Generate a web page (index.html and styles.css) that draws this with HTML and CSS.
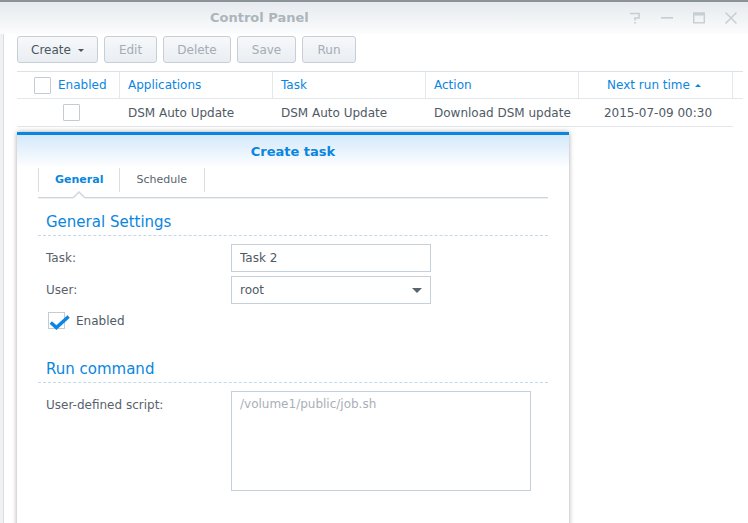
FILE: index.html
```html
<!DOCTYPE html>
<html lang="en">
<head>
<meta charset="utf-8">
<title>Control Panel</title>
<link rel="stylesheet" href="styles.css">
</head>
<body>
<div class="window">
  <header class="titlebar">
    <div class="title">Control Panel</div>
    <div class="win-ctrls">
      <span class="wc"><svg width="12" height="12" viewBox="0 0 12 12"><path d="M1 1.5H10V6H6V8.5" fill="none" stroke="#c7cdd3" stroke-width="1.6"/><rect x="5.2" y="10" width="1.6" height="1.6" fill="#c7cdd3"/></svg></span>
      <span class="wc"><svg width="12" height="12" viewBox="0 0 12 12"><rect x="0" y="5" width="12" height="1.6" fill="#c7cdd3"/></svg></span>
      <span class="wc"><svg width="12" height="12" viewBox="0 0 12 12"><rect x="0.7" y="1.2" width="10.6" height="9.6" fill="none" stroke="#c7cdd3" stroke-width="1.4"/><rect x="0" y="0.5" width="12" height="3" fill="#c7cdd3"/></svg></span>
      <span class="wc"><svg width="12" height="12" viewBox="0 0 12 12"><path d="M0.5 0.5L11.5 11.5M11.5 0.5L0.5 11.5" stroke="#c7cdd3" stroke-width="1.5"/></svg></span>
    </div>
  </header>

  <main class="panel">
    <div class="toolbar">
      <button class="btn btn-create">Create <span class="caret"></span></button>
      <button class="btn btn-edit" disabled>Edit</button>
      <button class="btn btn-delete" disabled>Delete</button>
      <button class="btn btn-save" disabled>Save</button>
      <button class="btn btn-run" disabled>Run</button>
    </div>

    <div class="grid">
      <div class="th th-enabled"><span class="cb"></span><span>Enabled</span></div>
      <div class="th">Applications</div>
      <div class="th">Task</div>
      <div class="th">Action</div>
      <div class="th th-center">Next run time <span class="sort-up"></span></div>
      <div class="th th-last"></div>

      <div class="td td-check"><span class="cb"></span></div>
      <div class="td">DSM Auto Update</div>
      <div class="td">DSM Auto Update</div>
      <div class="td">Download DSM update</div>
      <div class="td td-center">2015-07-09 00:30</div>
      <div class="td td-last"></div>
    </div>
  </main>

  <section class="dialog">
    <div class="dlg-header">Create task</div>
    <nav class="tabs">
      <span class="tab active">General</span>
      <span class="tab">Schedule</span>
    </nav>
    <div class="tab-body">
      <div class="fieldset">
        <div class="legend">General Settings</div>
        <div class="form">
          <div class="frow">
            <label class="flabel">Task:</label>
            <input class="finput" type="text" value="Task 2">
          </div>
          <div class="frow">
            <label class="flabel">User:</label>
            <div class="finput fselect"><span>root</span><span class="down"></span></div>
          </div>
          <div class="fcheck">
            <span class="cb-checked"><svg width="22" height="20" viewBox="0 0 22 20"><rect x="0.5" y="0.5" width="16" height="16" fill="#fff" stroke="#c3ccd5"/><path d="M2.8 10.4L8.4 15.6L20.6 4.4" fill="none" stroke="#0b86e2" stroke-width="3.4" stroke-linejoin="miter"/></svg></span>
            <span>Enabled</span>
          </div>
        </div>
      </div>

      <div class="fieldset run">
        <div class="legend">Run command</div>
        <div class="form">
          <div class="frow frow-top">
            <label class="flabel">User-defined script:</label>
            <textarea class="farea" placeholder="/volume1/public/job.sh"></textarea>
          </div>
        </div>
      </div>
    </div>
  </section>
</div>
</body>
</html>
```

FILE: styles.css
```css
* { box-sizing: border-box; }

html, body {
  margin: 0;
  padding: 0;
}

body {
  font-family: "DejaVu Sans", "Liberation Sans", sans-serif;
  font-size: 12px;
  color: #505a64;
  background: #ffffff;
}

.window {
  position: relative;
  width: 748px;
  height: 523px;
  overflow: hidden;
  background: #ffffff;
}

/* title bar */
.titlebar {
  height: 34px;
  border-top: 2px solid #8b9399;
  background: linear-gradient(#e6eaee, #fbfcfd);
  display: flex;
  align-items: center;
}

.title {
  flex: 1;
  padding-left: 210px;
  font-weight: bold;
  font-size: 13px;
  color: #adb5bc;
  line-height: 32px;
}

.win-ctrls {
  display: flex;
  margin-right: 1px;
}

.wc {
  width: 32px;
  height: 32px;
  display: flex;
  align-items: center;
  justify-content: center;
}

/* main panel */
.panel {
  height: 489px;
  border-left: 1px solid #dadee2;
  margin-left: 3px;
  padding-left: 13px;
  box-shadow: -3px 0 0 #f0f1f3;
}

.toolbar {
  display: flex;
  gap: 6px;
  padding-top: 2px;
}

.btn {
  height: 27px;
  border: 1px solid #c6cfd8;
  border-radius: 3px;
  background: linear-gradient(#f6f8fa, #eaeef2);
  font-family: inherit;
  font-size: 12px;
  color: #4b5661;
  padding: 0;
  display: flex;
  align-items: center;
  justify-content: center;
}

.btn[disabled] { color: #a3adb6; }

.btn-create { width: 81px; gap: 7px; }
.btn-edit { width: 53px; }
.btn-delete { width: 68px; }
.btn-save { width: 59px; }
.btn-run { width: 54px; }

.caret {
  width: 0;
  height: 0;
  border-left: 3px solid transparent;
  border-right: 3px solid transparent;
  border-top: 3px solid #4b5661;
  margin-top: 1px;
}

/* grid */
.grid {
  margin-top: 8px;
  display: grid;
  grid-template-columns: 103px 153px 153px 153px 154px 1fr;
}

.th {
  height: 28px;
  border-top: 1px solid #dbe1e6;
  border-bottom: 1px solid #e3e8ec;
  border-right: 1px solid #e3e8ec;
  color: #0a86e0;
  padding-left: 8px;
  display: flex;
  align-items: center;
  white-space: nowrap;
}

.th-enabled {
  padding-left: 17px;
  gap: 7px;
}

.th-center, .td-center {
  justify-content: center;
  padding-left: 0;
}

.th-center { gap: 5px; padding-right: 3px; }

.th-last { border-right: none; margin-right: 5px; }

.sort-up {
  width: 0;
  height: 0;
  border-left: 3px solid transparent;
  border-right: 3px solid transparent;
  border-bottom: 3px solid #0a86e0;
}

.td {
  height: 28px;
  border-bottom: 1px solid #e3e7eb;
  padding-left: 8px;
  display: flex;
  align-items: center;
  white-space: nowrap;
}

.td-center { padding-left: 4px; }

.td-check {
  padding-left: 46px;
}

.td-last { border-bottom: none; }

.cb {
  width: 17px;
  height: 17px;
  border: 1px solid #c3ccd5;
  border-radius: 1px;
  background: #fff;
  flex: none;
}

/* dialog */
.dialog {
  position: absolute;
  left: 17px;
  top: 132px;
  width: 552px;
  height: 420px;
  background: #ffffff;
  border-top: 3px solid #0a86e0;
  box-shadow: 0 0 5px rgba(0, 0, 0, 0.35);
}

.dlg-header {
  height: 33px;
  line-height: 33px;
  text-align: center;
  font-weight: bold;
  font-size: 13px;
  color: #0a86e0;
  background: linear-gradient(#d4e8fa, #ffffff);
}

.tabs {
  margin: 0 21px;
  height: 30px;
  display: flex;
  align-items: flex-start;
  border-bottom: 1px solid #cfd5da;
  box-shadow: 0 1px 0 #edf0f2;
}

.tab {
  position: relative;
  height: 24px;
  line-height: 24px;
  padding: 0 17px 0 16px;
  font-size: 11px;
  color: #5a646e;
  border-left: 1px solid #d9dee3;
}

.tab:last-child { border-right: 1px solid #d9dee3; }

.tab.active {
  font-weight: bold;
  color: #0a86e0;
  padding-right: 16px;
}

.tab.active::before,
.tab.active::after {
  content: "";
  position: absolute;
  left: 50%;
  width: 0;
  height: 0;
  border-style: solid;
  border-color: transparent;
}

.tab.active::before {
  top: 23px;
  margin-left: -7px;
  border-width: 0 7px 7px 7px;
  border-bottom-color: #cfd5da;
}

.tab.active::after {
  top: 25px;
  margin-left: -6px;
  border-width: 0 6px 6px 6px;
  border-bottom-color: #ffffff;
}

.tab-body {
  padding: 0 21px;
}

.fieldset { margin-top: 12px; }
.fieldset.run { margin-top: 28px; }

.legend {
  font-size: 15px;
  line-height: 22px;
  color: #0a86e0;
  padding-left: 8px;
  padding-top: 1px;
  padding-bottom: 2px;
  border-bottom: 1px dashed #c4d8eb;
}

.form {
  padding-top: 8px;
  display: flex;
  flex-direction: column;
  gap: 4px;
}

.frow {
  display: grid;
  grid-template-columns: 193px auto;
  align-items: center;
}

.frow-top { align-items: start; }
.frow-top .flabel { padding-top: 7px; }

.flabel {
  padding-left: 8px;
  color: #58626c;
  line-height: 15px;
}

.finput {
  width: 200px;
  height: 28px;
  border: 1px solid #c6d0da;
  background: #fff;
  padding: 0 8px;
  font-family: inherit;
  font-size: 12px;
  color: #505a64;
  outline: none;
  margin: 0;
}

.fselect {
  display: flex;
  align-items: center;
  justify-content: space-between;
}

.down {
  width: 0;
  height: 0;
  border-left: 5px solid transparent;
  border-right: 5px solid transparent;
  border-top: 5px solid #5a646e;
}

.fcheck {
  margin-top: 4px;
  padding-left: 10px;
  display: flex;
  align-items: center;
  gap: 6px;
  height: 17px;
}

.cb-checked {
  width: 22px;
  height: 20px;
  margin-top: 3px;
  display: block;
}

.cb-checked svg { display: block; }

.farea {
  width: 300px;
  height: 100px;
  border: 1px solid #c6d0da;
  padding: 5px 8px;
  font-family: inherit;
  font-size: 12px;
  line-height: 15px;
  color: #505a64;
  resize: none;
  outline: none;
  margin: 0;
}

.farea::placeholder { color: #a9b0b7; }
```
